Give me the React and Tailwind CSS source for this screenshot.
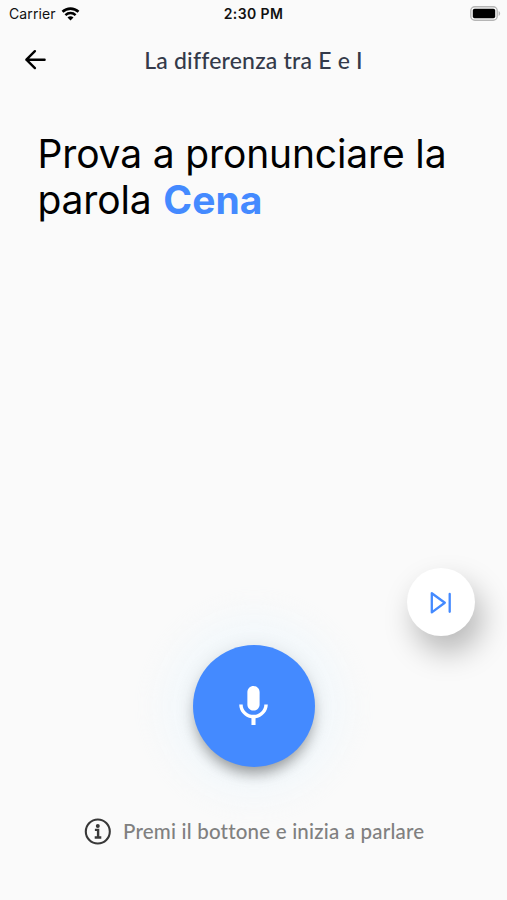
import { useState } from "react";

function StatusBar(){
    return (
        <div className="h-7 grid grid-cols-3 items-center pl-[9px] pr-[6px] text-[#111111] font-['Inter',sans-serif]">
            <div className="flex items-center gap-[5px]">
                <span className="text-[14px] leading-7 tracking-[0.12px]">Carrier</span>
                <svg className="w-[19px] h-[14px] -mt-px" viewBox="0 0 18 14" fill="none" stroke="black">
                    <path d="M1 4.8C5.5 .6 12.5 .6 17 4.8" strokeWidth="2.6" />
                    <path d="M3.9 8.1C6.8 5.4 11.2 5.4 14.1 8.1" strokeWidth="2.5" />
                    <path d="M9 13.4L6 10.5C7.8 8.9 10.2 8.9 12 10.5Z" fill="black" stroke="none" />
                </svg>
            </div>
            <span className="-ml-[3px] text-center text-[14px] leading-7 font-semibold tracking-[0.4px] whitespace-nowrap">2:30 PM</span>
            <svg className="justify-self-end w-[31px] h-[15px] -mt-[2px]" viewBox="0 0 31 15">
                <rect x=".8" y=".8" width="26.4" height="13.4" rx="4" fill="#fafafa" stroke="#b5b5b5" strokeWidth="1.4" />
                <rect x="2.8" y="2.8" width="22.4" height="9.4" rx="1.8" fill="black" />
                <path d="M28.6 5v5c2-.8 2-4.2 0-5z" fill="#b5b5b5" />
            </svg>
        </div>
    );
}

function App(){

    const [recording, setRecording] = useState(false);

    return (
        <div className="w-[507px] h-[900px] bg-[#fafafa] overflow-hidden flex flex-col">
            <StatusBar />

            <header className="h-16 grid grid-cols-[70px_1fr_70px] items-center">
                <button aria-label="Indietro" className="w-[70px] h-16 flex items-center justify-center">
                    <svg className="w-[22px] h-[22px]" viewBox="0 0 22 22" fill="none" stroke="black" strokeWidth="2.4" strokeLinecap="round" strokeLinejoin="round">
                        <path d="M10.9 2.2L2.4 10.7l8.5 8.4M2.4 10.7h18.2" />
                    </svg>
                </button>
                <h1 className="text-center text-[23px] leading-8 tracking-[0.2px] whitespace-nowrap font-medium text-[#343a4a] font-['Lato',sans-serif]">La differenza tra E e I</h1>
            </header>

            <p className="mt-[39px] pl-[37.5px] text-[39px] leading-[46px] tracking-[-0.15px] text-black whitespace-nowrap font-['Inter',sans-serif]">
                Prova a pronunciare la<br />
                parola <span className="ml-px font-bold tracking-normal text-[#448aff]">Cena</span>
            </p>

            <div className="mt-auto flex justify-end pr-8">
                <button aria-label="Salta" className="w-[68px] h-[68px] rounded-full bg-white flex items-center justify-center shadow-[7px_16px_30px_rgba(0,0,0,0.27)]">
                    <svg className="w-6 h-6" viewBox="0 0 24 24" fill="none" stroke="#448aff" strokeWidth="2.3" strokeLinecap="round" strokeLinejoin="round">
                        <path d="M2.8 3.2v19.2L15.8 12.8z" />
                        <path d="M20.7 4v17.8" />
                    </svg>
                </button>
            </div>

            <div className="mt-[9px] flex justify-center">
                <button
                    aria-label="Parla"
                    onClick={() => setRecording(!recording)}
                    className="w-[122px] h-[122px] rounded-full bg-[#448aff] flex items-center justify-center shadow-[0_10px_14px_-4px_rgba(0,0,0,0.32),0_4px_20px_rgba(0,0,0,0.12),0_0_30px_32px_rgba(240,247,252,0.65)]"
                >
                    <svg className="w-[49px] h-[49px]" viewBox="0 0 24 24" fill="white">
                        <path d="M12 14c1.66 0 2.99-1.34 2.99-3L15 5c0-1.66-1.34-3-3-3S9 3.34 9 5v6c0 1.66 1.34 3 3 3zm5.3-3c0 3-2.54 5.1-5.3 5.1S6.7 14 6.7 11H5c0 3.41 2.72 6.23 6 6.72V21h2v-3.28c3.28-.48 6-3.3 6-6.72h-1.7z" />
                    </svg>
                </button>
            </div>

            <div className="mt-[48px] mb-[53px] h-8 flex items-center pl-[84px] gap-3">
                <svg className="w-[27px] h-[27px] shrink-0" viewBox="0 0 27 27" fill="none" stroke="#383838">
                    <circle cx="13.8" cy="13.5" r="12" strokeWidth="2.1" />
                    <circle cx="13.8" cy="7.9" r="2" fill="#383838" stroke="none" />
                    <path d="M10.9 11.9h3.2v7.6M10.7 19.5h6.6" strokeWidth="2.4" />
                </svg>
                <span className="-mt-px text-[20.5px] leading-8 tracking-[0.2px] whitespace-nowrap font-medium text-[#808080] font-['Lato',sans-serif]">Premi il bottone e inizia a parlare</span>
            </div>
        </div>
    );
}

export default App;
